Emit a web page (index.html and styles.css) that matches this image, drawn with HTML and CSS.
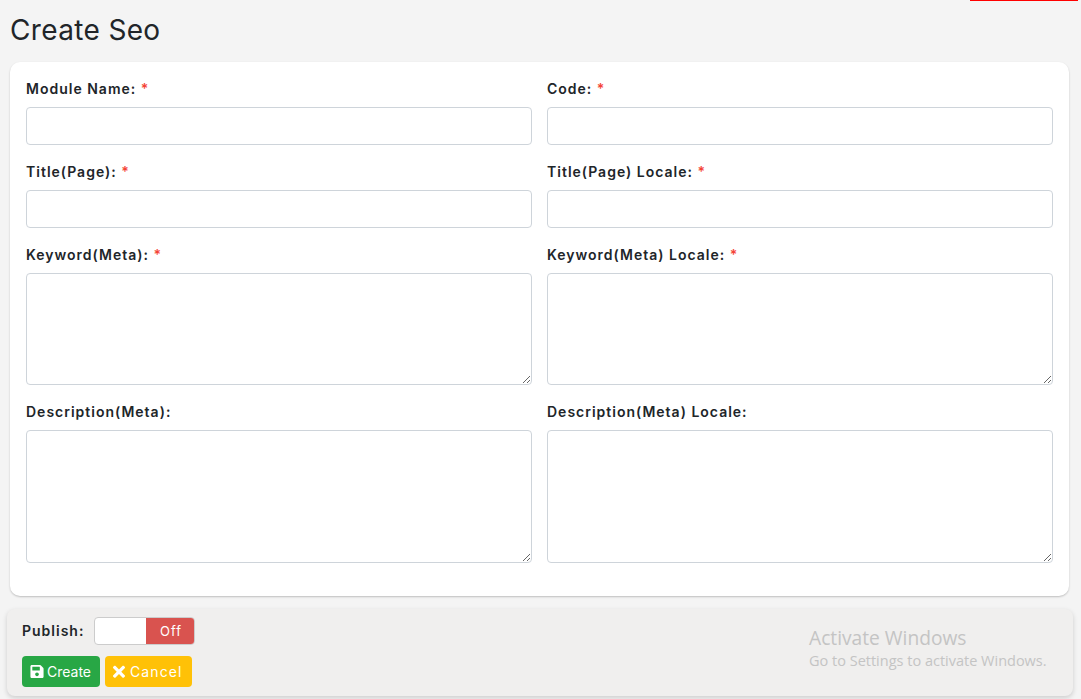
FILE: index.html
```html
<!DOCTYPE html>
<html lang="en">
<head>
<meta charset="utf-8">
<title>Create Seo</title>
<link rel="stylesheet" href="styles.css">
</head>
<body>
<div class="progress"></div>
<h1 class="title">Create Seo</h1>
<form class="card">
  <div class="grid">
    <div class="field"><label>Module Name: <span class="req">*</span></label><input class="control" type="text"></div>
    <div class="field"><label>Code: <span class="req">*</span></label><input class="control" type="text"></div>
    <div class="field"><label>Title(Page): <span class="req">*</span></label><input class="control" type="text"></div>
    <div class="field"><label>Title(Page) Locale: <span class="req">*</span></label><input class="control" type="text"></div>
    <div class="field"><label>Keyword(Meta): <span class="req">*</span></label><textarea class="control area-sm"></textarea></div>
    <div class="field"><label>Keyword(Meta) Locale: <span class="req">*</span></label><textarea class="control area-sm"></textarea></div>
    <div class="field"><label>Description(Meta):</label><textarea class="control area-lg"></textarea></div>
    <div class="field"><label>Description(Meta) Locale:</label><textarea class="control area-lg"></textarea></div>
  </div>
</form>
<div class="footer">
  <div class="publish">
    <span class="publish-label">Publish:</span>
    <div class="toggle"><span class="toggle-blank"></span><span class="toggle-off">Off</span></div>
  </div>
  <div class="actions">
    <button type="button" class="btn btn-create">
      <svg class="icon" viewBox="0 0 448 512"><path fill="currentColor" d="M433.9 129.9l-83.9-83.9A48 48 0 0 0 316.1 32H48C21.5 32 0 53.5 0 80v352c0 26.5 21.5 48 48 48h352c26.5 0 48-21.500 48-48V163.900a48 48 0 0 0-14.100-34zM224 416c-35.300 0-64-28.700-64-64 0-35.300 28.700-64 64-64s64 28.700 64 64c0 35.300-28.700 64-64 64zm96-304.500V212c0 6.600-5.400 12-12 12H76c-6.600 0-12-5.400-12-12V108c0-6.600 5.400-12 12-12h228.500c3.200 0 6.200 1.300 8.500 3.500l3.500 3.500c2.200 2.200 3.500 5.300 3.500 8.500z"/></svg>Create
    </button>
    <button type="button" class="btn btn-cancel">
      <svg class="icon" viewBox="0 0 352 512"><path fill="currentColor" d="M242.720 256l100.070-100.070c12.280-12.280 12.280-32.190 0-44.480l-22.240-22.240c-12.280-12.280-32.190-12.280-44.480 0L176 189.280 75.930 89.210c-12.280-12.280-32.190-12.280-44.480 0L9.210 111.450c-12.280 12.280-12.280 32.190 0 44.480L109.280 256 9.210 356.070c-12.280 12.280-12.280 32.190 0 44.480l22.240 22.240c12.280 12.280 32.200 12.280 44.480 0L176 322.720l100.070 100.070c12.280 12.280 32.200 12.280 44.480 0l22.240-22.240c12.280-12.280 12.280-32.190 0-44.480L242.720 256z"/></svg>Cancel
    </button>
  </div>
  <div class="activate">
    <div class="activate-title">Activate Windows</div>
    <div class="activate-sub">Go to Settings to activate Windows.</div>
  </div>
</div>
</body>
</html>
```
FILE: styles.css
```css
* { box-sizing: border-box; }
html, body { height: 100%; }
body {
  margin: 0;
  background: #f4f4f4;
  color: #212529;
  font-family: Inter, "Liberation Sans", sans-serif;
  overflow: hidden;
  position: relative;
}
.progress {
  position: absolute;
  top: 0;
  left: 970px;
  width: 108px;
  height: 1px;
  background: #ff0000;
}
.title {
  margin: 0;
  padding: 14px 0 0 10px;
  height: 62px;
  font-size: 28px;
  font-weight: 400;
  line-height: 33px;
  letter-spacing: 0.35px;
  color: #212529;
}
.card {
  margin: 0 12px 0 10px;
  height: 534px;
  background: #fff;
  border-radius: 10px;
  box-shadow: 0 1px 2px rgba(0,0,0,.22);
  padding: 16px;
}
.grid {
  display: grid;
  grid-template-columns: 506px 506px;
  column-gap: 15px;
}
.field { display: flex; flex-direction: column; }
.field label {
  display: block;
  height: 29px;
  font-size: 14px;
  line-height: 22px;
  font-weight: 600;
  letter-spacing: 1px;
  color: #212529;
}
.req { color: #f44336; }
.control {
  display: block;
  width: 100%;
  border: 1px solid #ced4da;
  border-radius: 4px;
  background: #fff;
  margin: 0 0 16px;
  outline: none;
}
input.control { height: 38px; }
textarea.control { resize: vertical; }
.area-sm { height: 112px; }
.area-lg { height: 133px; }
.footer {
  position: relative;
  margin: 13px 8px 0 7px;
  height: 87px;
  background: #f0efee;
  border-radius: 8px;
  box-shadow: 0 2px 5px rgba(0,0,0,.16);
  padding: 8px 15px;
}
.publish { display: flex; align-items: center; height: 28px; }
.publish-label {
  font-size: 14px;
  font-weight: 600;
  letter-spacing: 1px;
  width: 72px;
  color: #212529;
  position: relative;
  top: -1px;
}
.toggle {
  display: flex;
  width: 101px;
  height: 28px;
  border: 1px solid #ccc;
  border-radius: 4px;
  overflow: hidden;
  background: #fff;
}
.toggle-blank { width: 51px; }
.toggle-off {
  flex: 1;
  background: #d9534f;
  color: #fff;
  font-size: 13px;
  letter-spacing: 1px;
  line-height: 26px;
  padding-left: 2px;
  text-align: center;
}
.actions { display: flex; gap: 5px; margin-top: 11px; }
.btn {
  display: inline-flex;
  align-items: center;
  height: 31px;
  border: 0;
  border-radius: 4px;
  color: #fff;
  font-family: Inter, "Liberation Sans", sans-serif;
  font-size: 14px;
  padding: 0 8px;
}
.btn-create { background: #28a745; width: 78px; }
.btn-cancel { background: #ffc107; width: 87px; letter-spacing: 1.1px; }
.icon { flex: none; }
.btn-create .icon { width: 14px; height: 15px; margin-right: 3px; }
.btn-cancel .icon { width: 12px; height: 17.5px; margin-right: 5px; }
.activate {
  position: absolute;
  left: 802px;
  top: 16px;
  font-family: "Open Sans", "Noto Sans", sans-serif;
  color: #c4c4c4;
}
.activate-title { font-size: 19.2px; line-height: 25px; }
.activate-sub { font-size: 14.5px; line-height: 21px; }
```
